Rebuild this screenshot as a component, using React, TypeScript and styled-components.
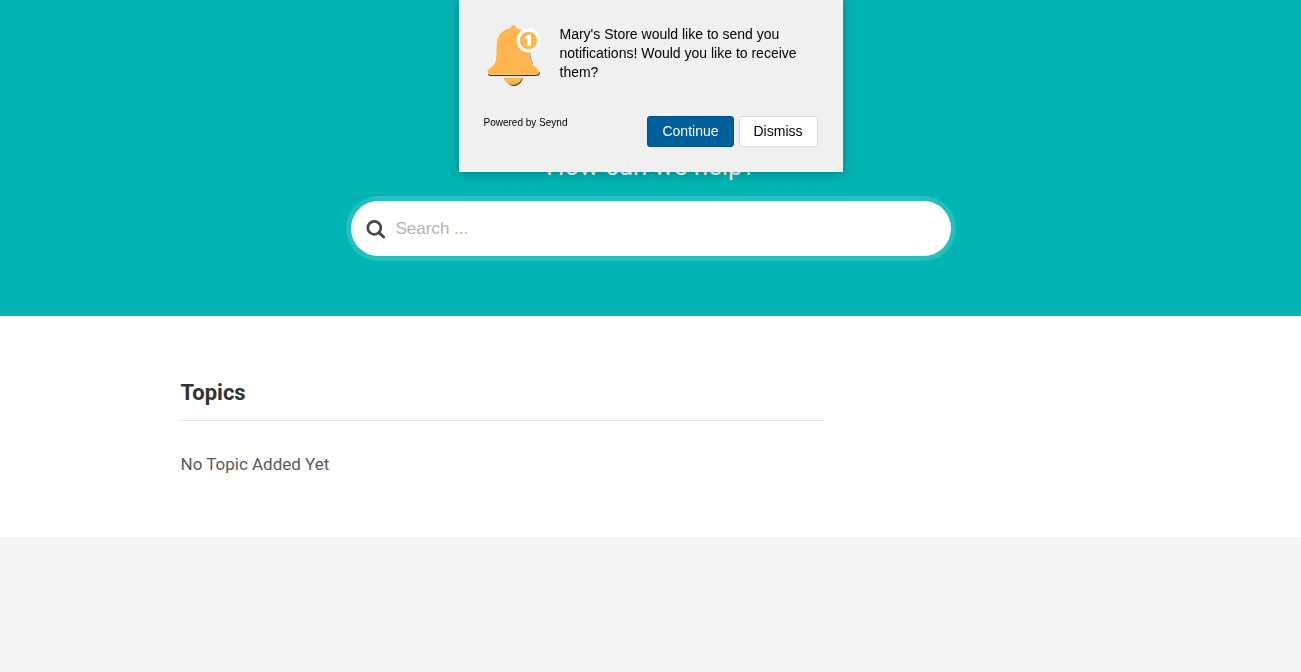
import React from 'react';
import styled, { createGlobalStyle } from 'styled-components';

const GlobalStyle = createGlobalStyle`
  *, *::before, *::after { box-sizing: border-box; }
  body {
    margin: 0;
    background: #f4f6f5;
    color: #595959;
    font-family: Roboto, sans-serif;
    font-size: 17px;
    line-height: 26px;
  }
`;

const Hero = styled.header`
  display: flex;
  flex-direction: column;
  align-items: center;
  gap: 18px;
  padding: 150px 20px 60px;
  background: #00b4b3;
`;

const HeroTitle = styled.h1`
  margin: 0;
  color: #fff;
  font-size: 26px;
  font-weight: 400;
  line-height: 33px;
`;

const SearchForm = styled.form`
  display: flex;
  align-items: center;
  gap: 10px;
  width: 100%;
  max-width: 600px;
  height: 55px;
  padding: 0 15px;
  border-radius: 28px;
  background: #fff;
  box-shadow: 0 0 0 5px rgba(255, 255, 255, 0.15);
`;

const SearchButton = styled.button`
  display: flex;
  padding: 0;
  border: 0;
  background: none;
  cursor: pointer;
`;

const SearchInput = styled.input`
  flex: 1;
  min-width: 0;
  padding: 0;
  border: 0;
  outline: 0;
  background: none;
  color: #333;
  font-family: 'Liberation Sans', Arial, sans-serif;
  font-size: 17px;
  line-height: 20px;
  &::placeholder { color: #b3b3b3; opacity: 1; }
`;

const Main = styled.main`
  padding: 60px 20px;
  background: #fff;
`;

const Container = styled.div`
  max-width: 940px;
  margin: 0 auto;
`;

const Topics = styled.section`
  width: 100%;
  max-width: 643px;
`;

const TopicsTitle = styled.h2`
  margin: 0 0 30px;
  padding-bottom: 10px;
  border-bottom: 1px solid #e4e4e4;
  color: #333;
  font-size: 22px;
  font-weight: 700;
  line-height: 34px;
`;

const TopicsEmpty = styled.p`
  margin: 0;
`;

const Prompt = styled.aside`
  position: fixed;
  top: 0;
  left: 0;
  right: 0;
  z-index: 10;
  display: flex;
  flex-direction: column;
  gap: 28px;
  width: 384px;
  max-width: 100%;
  margin: 0 auto;
  padding: 25px;
  background: #f0f0f0;
  box-shadow: 0 1px 10px rgba(0, 0, 0, 0.3);
  color: #000;
  font-family: 'Liberation Sans', Arial, sans-serif;
`;

const PromptBody = styled.div`
  display: flex;
  gap: 16px;
`;

const PromptText = styled.p`
  flex: 1;
  margin: 0;
  font-size: 14px;
  line-height: 19px;
`;

const PromptFooter = styled.div`
  display: flex;
  align-items: flex-start;
  justify-content: space-between;
`;

const PoweredBy = styled.a`
  color: #000;
  font-size: 10px;
  line-height: 14px;
  text-decoration: none;
`;

const PromptActions = styled.div`
  display: flex;
  gap: 5px;
`;

const PromptButton = styled.button<{ $primary?: boolean }>`
  height: 31px;
  padding: 0 14px 2px;
  border: 1px solid ${p => (p.$primary ? '#004f87' : '#d9d9d9')};
  border-radius: 3px;
  background: ${p => (p.$primary ? '#005e9a' : '#fff')};
  color: ${p => (p.$primary ? '#fff' : '#000')};
  font-family: inherit;
  font-size: 14px;
  line-height: 20px;
  cursor: pointer;
`;

const BellIcon = () => (
  <svg width="60" height="63" viewBox="0 1 60 63" aria-hidden="true">
    <path
      d="M4.500 50Q5 51.500 7.500 51.500H51.500Q55.200 51.500 55.500 48.500"
      fill="none"
      stroke="#3a2d1c"
      strokeWidth="1.200"
    />
    <path d="M20.500 54H39Q36 62 30 62T20.500 54Z" fill="#33281a" />
    <path d="M19.500 54H38.500Q35.500 61 29 61T19.500 54Z" fill="#ffb54f" />
    <path d="M45.800 28Q46.200 36 48.700 40" fill="none" stroke="#8b8375" strokeWidth="0.800" />
    <path
      d="M26.500 4.200C27 2.300 28 1 29.500 1S31.800 2.300 32.300 4.200C40 6 45 12 45.300 20C45.500 29 45.500 36 48.200 40C50 42.800 55 44.500 55 48C55 50 53.500 50.700 51.500 50.700H7C4.800 50.700 3.500 49.500 3.500 47.500C3.500 44.500 8 43.500 10.500 40C12.800 36.500 12.400 29 12.700 20C13.100 11 18.500 5.500 26.500 4.200Z"
      fill="#ffb54f"
    />
    <circle cx="44.500" cy="16.500" r="10.300" fill="#ffb54f" stroke="#fff" strokeWidth="3.200" />
    <path d="M43.800 10.800H47V22H43.300V14.700H40.700V12.700Q42.800 12.700 43.800 10.800Z" fill="#fff" />
  </svg>
);

const SearchIcon = () => (
  <svg width="20" height="20" viewBox="0 0 20 20" fill="none" stroke="#484848" aria-hidden="true">
    <circle cx="8.300" cy="8.800" r="6.500" strokeWidth="2.700" />
    <path d="M13 13.600L17.600 18" strokeWidth="2.900" strokeLinecap="round" />
  </svg>
);

export default function App() {
  return (
    <>
      <GlobalStyle />
      <Prompt role="dialog" aria-label="Notification permission">
        <PromptBody>
          <BellIcon />
          <PromptText>
            Mary's Store would like to send you notifications! Would you like to receive them?
          </PromptText>
        </PromptBody>
        <PromptFooter>
          <PoweredBy href="#">Powered by Seynd</PoweredBy>
          <PromptActions>
            <PromptButton type="button" $primary>Continue</PromptButton>
            <PromptButton type="button">Dismiss</PromptButton>
          </PromptActions>
        </PromptFooter>
      </Prompt>
      <Hero>
        <HeroTitle>How can we help?</HeroTitle>
        <SearchForm role="search" onSubmit={e => e.preventDefault()}>
          <SearchButton type="submit" aria-label="Submit search">
            <SearchIcon />
          </SearchButton>
          <SearchInput type="text" placeholder="Search ..." aria-label="Search" />
        </SearchForm>
      </Hero>
      <Main>
        <Container>
          <Topics>
            <TopicsTitle>Topics</TopicsTitle>
            <TopicsEmpty>No Topic Added Yet</TopicsEmpty>
          </Topics>
        </Container>
      </Main>
    </>
  );
}
